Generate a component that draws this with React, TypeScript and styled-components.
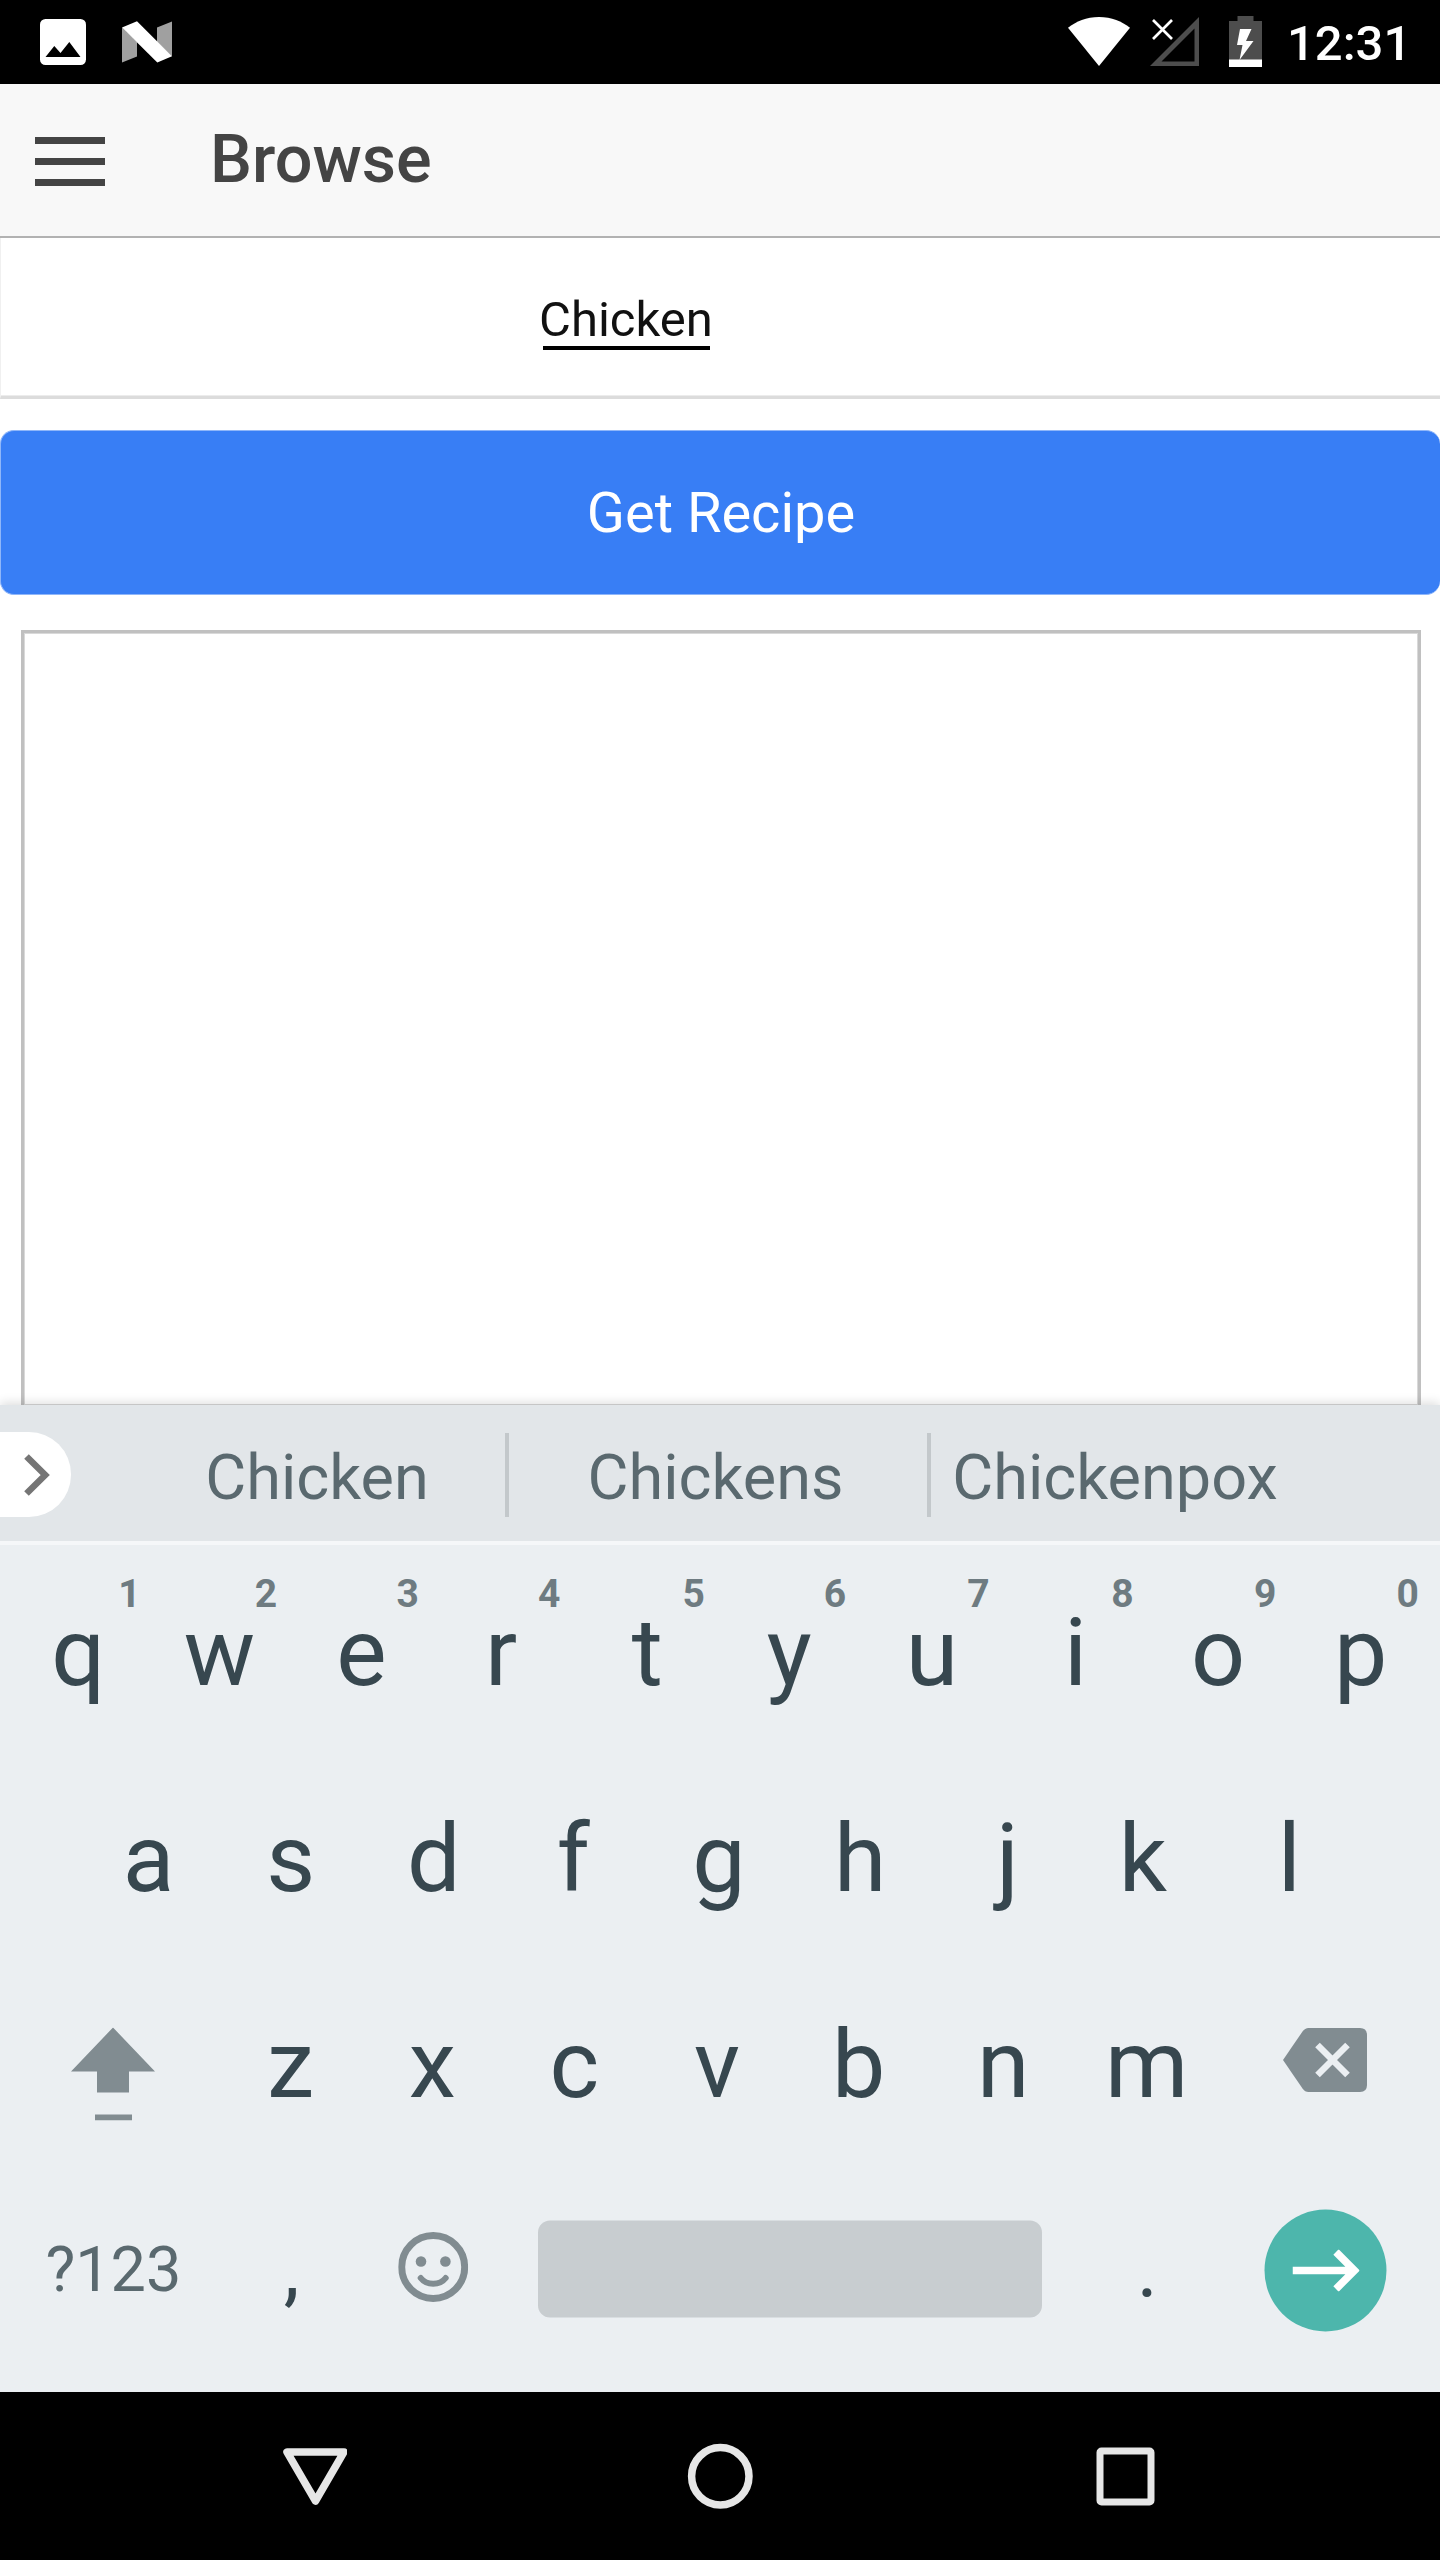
import React from "react";
import styled, { createGlobalStyle } from "styled-components";

const GlobalStyle = createGlobalStyle`
  * { box-sizing: border-box; }
  html, body { margin: 0; padding: 0; background: #fff; }
  body { font-family: Roboto, "Noto Sans", sans-serif; }
  svg { display: block; flex: none; }
`;

const Screen = styled.div`
  width: 1440px;
  height: 2560px;
  display: flex;
  flex-direction: column;
  overflow: hidden;
  background: #fff;
`;

const StatusBar = styled.div`
  flex: none;
  height: 84px;
  display: flex;
  justify-content: space-between;
  padding: 0 32px 0 40px;
  background: #000;
`;

const StatusGroup = styled.div`
  display: flex;
  align-items: flex-start;
`;

const StatusIcon = styled.svg<{ $gap: number; $top: number }>`
  margin-left: ${(p) => p.$gap}px;
  margin-top: ${(p) => p.$top}px;
`;

const Clock = styled.time`
  width: 121px;
  margin-left: 25px;
  font-size: 49px;
  font-weight: 500;
  line-height: 88px;
  white-space: nowrap;
  color: #fff;
`;

const Header = styled.header`
  flex: none;
  height: 154px;
  display: flex;
  align-items: center;
  padding-left: 35px;
  background: #f8f8f8;
  border-bottom: 2px solid #b2b2b2;
`;

const MenuButton = styled.button`
  width: 70px;
  height: 49px;
  margin-top: 3px;
  padding: 0;
  border: 0;
  background: none;
  display: flex;
  flex-direction: column;
  justify-content: space-between;
`;

const MenuBar = styled.span`
  height: 7px;
  background: #444;
`;

const Title = styled.h1`
  margin: 0 0 2px 105px;
  font-size: 66.5px;
  font-weight: 500;
  line-height: 150px;
  color: #444;
`;

const Content = styled.main`
  flex: none;
  height: 1167px;
  display: flex;
  flex-direction: column;
  overflow: hidden;
`;

const SearchField = styled.div`
  flex: none;
  height: 161px;
  padding-left: 538px;
  border: solid #dcdcdc;
  border-width: 0 0 3px 1px;
  border-left-color: #f0f0f0;
  box-shadow: inset 0 -1px #ececec;
`;

const SearchValue = styled.span`
  position: relative;
  display: inline-block;
  font-size: 49px;
  line-height: 164px;
  color: #111;

  &::after {
    content: "";
    position: absolute;
    left: 4px;
    right: 3px;
    top: 108px;
    height: 4px;
    background: #000;
  }
`;

const PrimaryButton = styled.button`
  flex: none;
  height: 165px;
  margin-top: 31px;
  padding: 1px 0 0 1px;
  border: 1px solid #8fb6f9;
  border-right: 0;
  border-radius: 14px;
  background: #387ef5;
  font-family: inherit;
  font-size: 56px;
  color: #fff;
`;

const ResultBox = styled.div`
  flex: 1;
  margin: 35px 19px 0 21px;
  border: solid #c0c0c0;
  border-width: 3px 3px 0;
  box-shadow: inset 0 0 0 1px #d9d9d9;
`;

const Keyboard = styled.section`
  position: relative;
  flex: none;
  height: 987px;
  display: flex;
  flex-direction: column;
  background: #ebeff2;
  box-shadow: 0 -2px 10px rgba(0, 0, 0, 0.14);
`;

const SuggestionStrip = styled.div`
  flex: none;
  height: 140px;
  display: flex;
  align-items: center;
  background: #e2e6e9;
  border-bottom: 4px solid #f5f7f9;
`;

const ExpandChip = styled.button`
  width: 71px;
  height: 85px;
  padding: 0 0 0 24px;
  margin: 3px 58px 0 0;
  border: 0;
  border-radius: 0 42px 42px 0;
  background: #fff;
  display: flex;
  align-items: center;
`;

const Suggestion = styled.span<{ $width: number; $inset?: number }>`
  width: ${(p) => p.$width}px;
  padding: 9px ${(p) => p.$inset ?? 0}px 0 0;
  font-size: 63px;
  line-height: 74px;
  text-align: center;
  color: #5a696f;
`;

const SuggestionDivider = styled.span`
  width: 4px;
  height: 84px;
  margin-top: 3px;
  background: #c3c8cb;
`;

const KeyRows = styled.div`
  padding: 5px 6px 0;
`;

const KeyRow = styled.div<{ $inset?: number }>`
  height: 206px;
  display: flex;
  padding: 0 ${(p) => p.$inset ?? 0}px;
`;

const Key = styled.button<{ $units?: number; $size?: number }>`
  position: relative;
  flex: none;
  width: ${(p) => (p.$units ?? 1) * 142.6}px;
  height: 206px;
  padding: 0;
  border: 0;
  background: none;
  display: flex;
  align-items: center;
  justify-content: center;
  font-family: inherit;
  font-size: ${(p) => p.$size ?? 95}px;
  line-height: 112px;
  color: #37474f;
`;

const SymbolKey = styled(Key)`
  color: #5a696f;
`;

const KeyCap = styled.span<{ $dx?: number; $dy?: number }>`
  display: block;
  transform: translate(${(p) => p.$dx ?? 0}px, ${(p) => p.$dy ?? 0}px);
`;

const Hint = styled.sup<{ $dx: number }>`
  position: absolute;
  top: 21px;
  right: ${(p) => 14 - p.$dx}px;
  font-size: 39px;
  font-weight: 700;
  line-height: 46px;
  color: #6e7b81;
`;

const SpaceBar = styled.span`
  display: block;
  width: 504px;
  height: 97px;
  border-radius: 12px;
  background: #c8cdd0;
`;

const EnterCircle = styled.span`
  width: 122px;
  height: 122px;
  border-radius: 50%;
  background: #4db6ac;
  display: flex;
  align-items: center;
  justify-content: center;
`;

const NavBar = styled.nav`
  flex: none;
  height: 168px;
  display: flex;
  align-items: center;
  justify-content: center;
  gap: 340px;
  background: #000;
`;

// [letter, optical offset of the letter, digit, optical offset of the digit]
const NUMBER_ROW: [string, number, string, number][] = [
  ["q", 1, "1", 6],
  ["w", -0.5, "2", 0],
  ["e", -1, "3", -1],
  ["r", -4, "4", -2],
  ["t", -0.5, "5", 0],
  ["y", -1, "6", -1.5],
  ["u", -1, "7", -0.5],
  ["i", 0, "8", 1],
  ["o", 0, "9", 1],
  ["p", 0, "0", 1],
];

const HOME_ROW: [string, number][] = [
  ["a", 0], ["s", -0.5], ["d", 0], ["f", -3], ["g", 0],
  ["h", -1.5], ["j", 3.5], ["k", -4], ["l", 0],
];

const BOTTOM_ROW: [string, number][] = [
  ["z", -0.5], ["x", -1.5], ["c", -2], ["v", -2],
  ["b", -3], ["n", -1], ["m", 0],
];

const PictureIcon = () => (
  <StatusIcon $gap={0} $top={19} width="46" height="46" viewBox="0 0 46 46">
    <rect width="46" height="46" rx="5.5" fill="#fff" />
    <path d="M5.5 38L14.3 27L20.5 34L29.3 23L40.5 38Z" fill="#000" />
  </StatusIcon>
);

const NougatIcon = () => (
  <StatusIcon $gap={36} $top={21} width="50" height="42" viewBox="0 0 50 42">
    <path d="M0 6.5L15 21V35.5L0 41.5Z" fill="#a0a0a0" />
    <path d="M35 6.5L50 .5V35.5L35 21Z" fill="#a0a0a0" />
    <path d="M0 6.5L15 .3L50 35.3L35.3 41.4Z" fill="#fff" />
  </StatusIcon>
);

const WifiIcon = () => (
  <StatusIcon $gap={0} $top={17} width="62" height="49" viewBox="0 0 62 49">
    <path d="M31 49L0 10.8C8 4.4 18.5 0 31 0S54 4.4 62 10.8Z" fill="#fff" />
  </StatusIcon>
);

const NoSignalIcon = () => (
  <StatusIcon $gap={20} $top={17} width="49" height="49" viewBox="0 0 49 49">
    <path d="M49 0V49H0ZM44.5 11.5L11.5 44.5H44.5Z" fill="#4d4d4d" fillRule="evenodd" />
    <path d="M3 3L22 22M22 3L3 22" stroke="#fff" strokeWidth="2.7" />
  </StatusIcon>
);

const BatteryIcon = () => (
  <StatusIcon $gap={30} $top={16} width="33" height="51" viewBox="0 0 33 51">
    <path d="M8.5 0H24.5V5H33V44H0V5H8.5Z" fill="#4d4d4d" />
    <path d="M0 43.5H33V51H0Z" fill="#fff" />
    <path d="M11 13H22.5L17 25H24.5L10.5 44L13.5 29H8Z" fill="#fff" />
  </StatusIcon>
);

const ChevronIcon = () => (
  <svg width="26" height="42" viewBox="0 0 26 42">
    <path d="M2.5 2.5L21.2 21L2.5 39.5" fill="none" stroke="#757575" strokeWidth="6.5" />
  </svg>
);

const ShiftIcon = () => (
  <svg width="84" height="93" viewBox="0 0 84 93">
    <path d="M42 0L84 44H58V65H26V44H0Z" fill="#818c91" />
    <path d="M24 87H61V93H24Z" fill="#818c91" />
  </svg>
);

const BackspaceIcon = () => (
  <svg width="84" height="64" viewBox="0 0 84 64">
    <path d="M25.5 0H77Q84 0 84 7V57Q84 64 77 64H25.5Q22 64 19.5 60.5L0 32L19.5 3.5Q22 0 25.5 0Z" fill="#818c91" />
    <path d="M34.5 17L64.5 47M64.5 17L34.5 47" stroke="#ebeff2" strokeWidth="6.5" />
  </svg>
);

const SmileyIcon = () => (
  <svg width="70" height="70" viewBox="0 0 70 70">
    <circle cx="35" cy="35" r="31.5" fill="none" stroke="#818c91" strokeWidth="7" />
    <circle cx="22.8" cy="29.5" r="5.3" fill="#818c91" />
    <circle cx="47.2" cy="29.5" r="5.3" fill="#818c91" />
    <path d="M22.5 46Q27 51.8 35 51.8T47.5 46" fill="none" stroke="#818c91" strokeWidth="6" strokeLinecap="round" />
  </svg>
);

const ArrowIcon = () => (
  <svg width="67" height="42" viewBox="0 0 67 42">
    <path d="M0 21H60M43.5 2.5L62 21L43.5 39.5" fill="none" stroke="#fff" strokeWidth="7.5" />
  </svg>
);

const BackIcon = () => (
  <svg width="66" height="66" viewBox="0 0 66 66">
    <path d="M6 9H63L34.5 58Z" fill="none" stroke="#e6e6e6" strokeWidth="7.5" strokeLinejoin="round" />
  </svg>
);

const HomeIcon = () => (
  <svg width="66" height="66" viewBox="0 0 66 66">
    <circle cx="33.3" cy="33.3" r="28.7" fill="none" stroke="#e6e6e6" strokeWidth="7.5" />
  </svg>
);

const RecentsIcon = () => (
  <svg width="66" height="66" viewBox="0 0 66 66">
    <rect x="7" y="8" width="51" height="51" rx="1.5" fill="none" stroke="#e6e6e6" strokeWidth="7" />
  </svg>
);

export default function App() {
  return (
    <>
      <GlobalStyle />
      <Screen>
        <StatusBar>
          <StatusGroup>
            <PictureIcon />
            <NougatIcon />
          </StatusGroup>
          <StatusGroup>
            <WifiIcon />
            <NoSignalIcon />
            <BatteryIcon />
            <Clock>12:31</Clock>
          </StatusGroup>
        </StatusBar>

        <Header>
          <MenuButton aria-label="Menu">
            <MenuBar />
            <MenuBar />
            <MenuBar />
          </MenuButton>
          <Title>Browse</Title>
        </Header>

        <Content>
          <SearchField>
            <SearchValue>Chicken</SearchValue>
          </SearchField>
          <PrimaryButton>Get Recipe</PrimaryButton>
          <ResultBox />
        </Content>

        <Keyboard>
          <SuggestionStrip>
            <ExpandChip aria-label="More">
              <ChevronIcon />
            </ExpandChip>
            <Suggestion $width={376}>Chicken</Suggestion>
            <SuggestionDivider />
            <Suggestion $width={418} $inset={5}>Chickens</Suggestion>
            <SuggestionDivider />
            <Suggestion $width={369} $inset={1}>Chickenpox</Suggestion>
          </SuggestionStrip>
          <KeyRows>
            <KeyRow>
              {NUMBER_ROW.map(([letter, dx, digit, digitDx]) => (
                <Key key={letter}>
                  <KeyCap $dx={dx}>{letter}</KeyCap>
                  <Hint $dx={digitDx}>{digit}</Hint>
                </Key>
              ))}
            </KeyRow>
            <KeyRow $inset={71.3}>
              {HOME_ROW.map(([letter, dx]) => (
                <Key key={letter}>
                  <KeyCap $dx={dx}>{letter}</KeyCap>
                </Key>
              ))}
            </KeyRow>
            <KeyRow>
              <Key $units={1.5} aria-label="Shift">
                <KeyCap $dy={8.5}>
                  <ShiftIcon />
                </KeyCap>
              </Key>
              {BOTTOM_ROW.map(([letter, dx]) => (
                <Key key={letter}>
                  <KeyCap $dx={dx}>{letter}</KeyCap>
                </Key>
              ))}
              <Key $units={1.5} aria-label="Backspace">
                <KeyCap $dy={-5}>
                  <BackspaceIcon />
                </KeyCap>
              </Key>
            </KeyRow>
            <KeyRow>
              <SymbolKey $units={1.5} $size={63}>
                <KeyCap $dx={0.5} $dy={-1}>?123</KeyCap>
              </SymbolKey>
              <Key $size={80}>
                <KeyCap $dx={0.5} $dy={-1}>,</KeyCap>
              </Key>
              <Key aria-label="Emoji">
                <KeyCap $dx={-0.8} $dy={-4}>
                  <SmileyIcon />
                </KeyCap>
              </Key>
              <Key $units={4} aria-label="Space">
                <KeyCap $dy={-2.5}>
                  <SpaceBar />
                </KeyCap>
              </Key>
              <Key $size={80}>
                <KeyCap $dx={0.5} $dy={-1}>.</KeyCap>
              </Key>
              <Key $units={1.5} aria-label="Enter">
                <KeyCap $dx={0.5} $dy={-0.5}>
                  <EnterCircle>
                    <ArrowIcon />
                  </EnterCircle>
                </KeyCap>
              </Key>
            </KeyRow>
          </KeyRows>
        </Keyboard>

        <NavBar>
          <BackIcon />
          <HomeIcon />
          <RecentsIcon />
        </NavBar>
      </Screen>
    </>
  );
}
